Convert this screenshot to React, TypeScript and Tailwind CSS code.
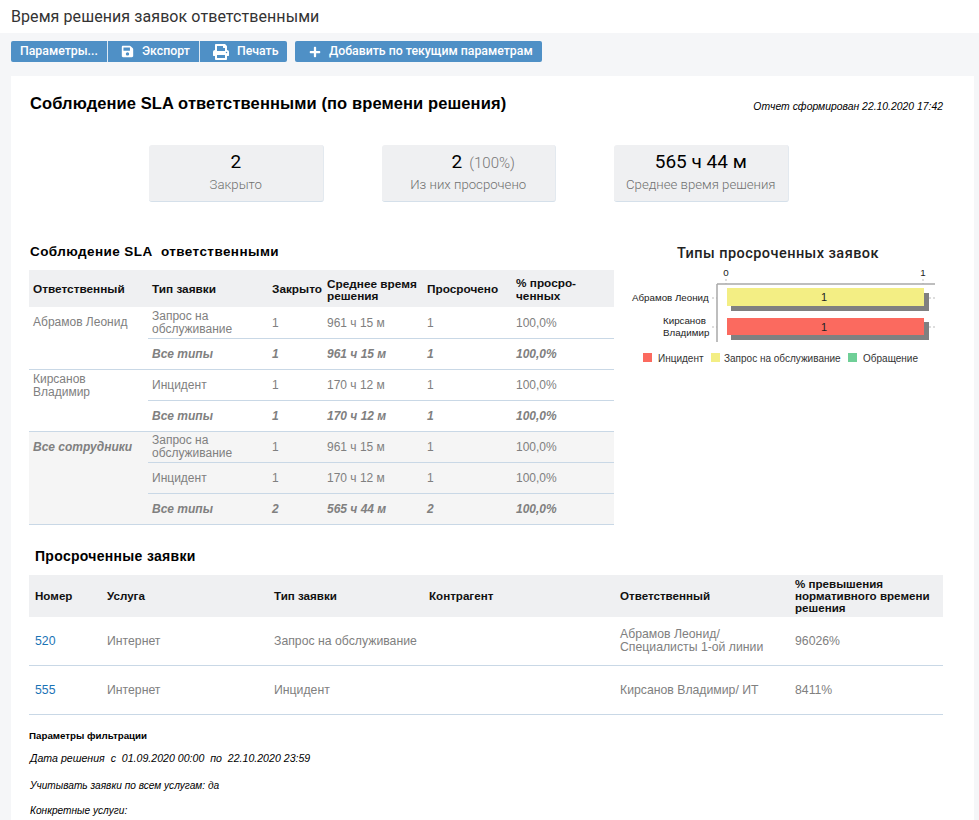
import { FaPlus, FaPrint, FaSave } from 'react-icons/fa'

const sans = "font-['Liberation_Sans',Arial,sans-serif]"

const Cell = ({ children, strong }: { children: React.ReactNode; strong?: boolean }) => (
  <td className={`px-1 pt-px align-middle leading-[13px] ${strong ? 'font-bold italic' : ''}`}>{children}</td>
)

const slaRows = [
  { who: 'Абрамов Леонид', whoClass: 'pt-[9px]', type: 'Запрос на обслуживание', closed: '1', avg: '961 ч 15 м', late: '1', pct: '100,0%' },
  { who: '', type: 'Все типы', closed: '1', avg: '961 ч 15 м', late: '1', pct: '100,0%', total: true, last: true },
  { who: 'Кирсанов Владимир', whoClass: 'pt-[3px]', type: 'Инцидент', closed: '1', avg: '170 ч 12 м', late: '1', pct: '100,0%' },
  { who: '', type: 'Все типы', closed: '1', avg: '170 ч 12 м', late: '1', pct: '100,0%', total: true, last: true },
]

const allRows = [
  { type: 'Запрос на обслуживание', closed: '1', avg: '961 ч 15 м', late: '1', pct: '100,0%' },
  { type: 'Инцидент', closed: '1', avg: '170 ч 12 м', late: '1', pct: '100,0%' },
  { type: 'Все типы', closed: '2', avg: '565 ч 44 м', late: '2', pct: '100,0%', total: true },
]

function StatCard({ value, note, label }: { value: string; note?: string; label: string }) {
  return (
    <div className="flex h-[57px] w-[174.5px] flex-col items-center rounded-[3px] border-r border-b border-r-[#e3e9ef] border-b-[#d5e0ea] bg-[#eff0f2] pt-[5px] font-['Roboto',sans-serif]">
      <div className={`h-[24px] text-[19px] leading-[24px] text-black ${note ? 'pl-[30px]' : ''}`}>
        {value}
        {note && <span className="ml-[7px] text-[15px] font-light text-[#777]">{note}</span>}
      </div>
      <div className="mt-[1px] text-[13.2px] font-light text-[#707070]">{label}</div>
    </div>
  )
}

function Chart() {
  return (
    <svg width="340" height="140" viewBox="0 0 340 140" className="block">
      <text x="158" y="23" textAnchor="middle" fontFamily="Roboto, sans-serif" fill="#222" fontSize="14.5" fontWeight="500" letterSpacing="0.45">
        Типы просроченных заявок
      </text>
      <path d="M92 63H97M92 92H97M309 63H315M309 92H315M106 44V49M303 44V49" stroke="#bbb" strokeWidth="1" strokeDasharray="2 2" fill="none" />
      <path d="M97 49H315M97 49V107" stroke="#a9a9a9" strokeWidth="1.5" fill="none" />
      <rect x="111" y="58" width="198" height="18" fill="#808080" />
      <rect x="111" y="87" width="198" height="18" fill="#808080" />
      <rect x="107" y="53" width="197" height="18" fill="#f3ee84" />
      <rect x="107" y="83" width="197" height="17" fill="#fb6a5f" />
      <g fontFamily="'Liberation Sans', sans-serif" fontSize="9.75" fill="#222">
        <text x="106" y="41" textAnchor="middle">0</text>
        <text x="303" y="41" textAnchor="middle">1</text>
        <text x="12" y="66">Абрамов Леонид</text>
        <text x="43" y="89">Кирсанов</text>
        <text x="43" y="101">Владимир</text>
      </g>
      <g fontFamily="'Liberation Sans', sans-serif" fontSize="11" fill="#222">
        <text x="204" y="66" textAnchor="middle">1</text>
        <text x="204" y="96" textAnchor="middle">1</text>
      </g>
      <rect x="23" y="118" width="9" height="9" fill="#fb6a5f" />
      <rect x="91" y="118" width="9" height="9" fill="#f3ee84" />
      <rect x="228" y="118" width="9" height="9" fill="#6fcf97" />
      <g fontFamily="'Liberation Sans', sans-serif" fontSize="10" fill="#333">
        <text x="38" y="127">Инцидент</text>
        <text x="104" y="127">Запрос на обслуживание</text>
        <text x="243" y="127">Обращение</text>
      </g>
    </svg>
  )
}

export default function App() {
  return (
    <div className={`h-[820px] w-[979px] overflow-hidden bg-[#f5f6f8] ${sans}`}>
      <div className="flex h-[33px] items-center bg-white pl-[11px] font-['Roboto',sans-serif] text-[16px] tracking-[0.08px] text-[#333]">
        Время решения заявок ответственными
      </div>

      <div className="flex h-[43px] items-start gap-2 pl-[11px] pt-2 font-['Roboto',sans-serif] text-[12.3px] font-medium text-white">
        <div className="flex h-[21px] overflow-hidden rounded-[2px] bg-[#4f90c6]">
          <div className="flex w-[97px] items-center border-r border-white/80 pl-[9px]">Параметры...</div>
          <div className="flex w-[92px] items-center gap-[8px] border-r border-white/80 pl-[13px]">
            <FaSave size={13} />
            Экспорт
          </div>
          <div className="flex w-[87px] items-center gap-[8px] pl-[13px]">
            <FaPrint size={16} />
            Печать
          </div>
        </div>
        <div className="flex h-[21px] w-[247px] items-center gap-[8px] rounded-[2px] bg-[#4f90c6] pl-[14px]">
          <FaPlus size={12} />
          Добавить по текущим параметрам
        </div>
      </div>

      <div className="ml-[11px] w-[963px] bg-white pl-[18px] pr-[31px] pt-[17px]">
        <div className="flex items-start justify-between">
          <h1 className="pl-px text-[16.5px] font-bold leading-[20px] tracking-[0.1px] text-black">
            Соблюдение SLA ответственными (по времени решения)
          </h1>
          <div className="pt-[8px] text-[10.4px] italic leading-[12px] text-black">Отчет сформирован 22.10.2020 17:42</div>
        </div>

        <div className="mt-[32px] flex gap-[58px] pl-[120px]">
          <StatCard value="2" label="Закрыто" />
          <StatCard value="2" note="(100%)" label="Из них просрочено" />
          <StatCard value="565 ч 44 м" label="Среднее время решения" />
        </div>

        <div className="mt-[39px] flex">
          <div className="w-[585px]">
            <h2 className="h-[29px] pl-px text-[13.5px] font-bold leading-[22px] tracking-[0.42px] text-black">
              Соблюдение SLA&nbsp; ответственными
            </h2>
            <table className="w-[585px] table-fixed border-collapse text-[12px] text-[#808080]">
              <colgroup>
                <col className="w-[119px]" />
                <col className="w-[120px]" />
                <col className="w-[55px]" />
                <col className="w-[100px]" />
                <col className="w-[89px]" />
                <col />
              </colgroup>
              <thead>
                <tr className="h-[37px] bg-[#eff0f2] text-left text-[11.8px] font-bold text-[#111]">
                  <th className="px-1 pt-[2px]">Ответственный</th>
                  <th className="px-1 pt-[2px]">Тип заявки</th>
                  <th className="px-1 pt-[2px]">Закрыто</th>
                  <th className="px-1 pt-[2px] leading-[12px]">Среднее время решения</th>
                  <th className="px-1 pt-[2px]">Просрочено</th>
                  <th className="px-1 pt-[2px] leading-[13px]">% просро-<br />ченных</th>
                </tr>
              </thead>
              <tbody>
                {slaRows.map((r, i) => (
                  <tr key={i} className={`h-[31px] ${r.last ? 'border-b border-b-[#c9d8e6]' : ''}`}>
                    {r.who ? (
                      <td rowSpan={2} className={`px-1 align-top leading-[13px] ${r.whoClass}`}>
                        {r.who}
                      </td>
                    ) : null}
                    <td className={`border-b border-b-[#c9d8e6] px-1 pt-px leading-[13px] ${r.total ? 'font-bold italic' : ''}`}>{r.type}</td>
                    <td className={`border-b border-b-[#c9d8e6] px-1 pt-px ${r.total ? 'font-bold italic' : ''}`}>{r.closed}</td>
                    <td className={`border-b border-b-[#c9d8e6] px-1 pt-px ${r.total ? 'font-bold italic' : ''}`}>{r.avg}</td>
                    <td className={`border-b border-b-[#c9d8e6] px-1 pt-px ${r.total ? 'font-bold italic' : ''}`}>{r.late}</td>
                    <td className={`border-b border-b-[#c9d8e6] px-1 pt-px ${r.total ? 'font-bold italic' : ''}`}>{r.pct}</td>
                  </tr>
                ))}
                {allRows.map((r, i) => (
                  <tr key={i} className="h-[31px] border-b border-b-[#c9d8e6] bg-[#f5f5f5]">
                    {i === 0 && (
                      <td rowSpan={3} className="px-1 pt-[9px] align-top font-bold italic leading-[13px]">
                        Все сотрудники
                      </td>
                    )}
                    <Cell strong={r.total}>{r.type}</Cell>
                    <Cell strong={r.total}>{r.closed}</Cell>
                    <Cell strong={r.total}>{r.avg}</Cell>
                    <Cell strong={r.total}>{r.late}</Cell>
                    <Cell strong={r.total}>{r.pct}</Cell>
                  </tr>
                ))}
              </tbody>
            </table>
          </div>
          <div className="-mt-[6px] ml-[6px]">
            <Chart />
          </div>
        </div>

        <h2 className="mt-[21px] h-[29px] pl-[6px] text-[14px] font-bold leading-[20px] tracking-[0.3px] text-black">
          Просроченные заявки
        </h2>
        <table className="w-[914px] table-fixed border-collapse text-[12.25px] text-[#808080]">
          <colgroup>
            <col className="w-[72px]" />
            <col className="w-[167px]" />
            <col className="w-[155px]" />
            <col className="w-[191px]" />
            <col className="w-[175px]" />
            <col />
          </colgroup>
          <thead>
            <tr className="h-[42px] bg-[#eff0f2] text-left text-[11.6px] font-bold text-[#111]">
              <th className="px-[6px]">Номер</th>
              <th className="px-[6px]">Услуга</th>
              <th className="px-[6px]">Тип заявки</th>
              <th className="px-[6px]">Контрагент</th>
              <th className="px-[6px]">Ответственный</th>
              <th className="px-[6px] leading-[12px]">
                % превышения нормативного времени решения
              </th>
            </tr>
          </thead>
          <tbody>
            <tr className="h-[49px] border-b border-b-[#c9d8e6]">
              <td className="px-[6px] text-[#1a73b5]">520</td>
              <td className="px-[6px]">Интернет</td>
              <td className="whitespace-nowrap px-[6px]">Запрос на обслуживание</td>
              <td className="px-[6px]"></td>
              <td className="px-[6px] leading-[13px]">Абрамов Леонид/<br />Специалисты 1-ой линии</td>
              <td className="px-[6px]">96026%</td>
            </tr>
            <tr className="h-[49px] border-b border-b-[#c9d8e6]">
              <td className="px-[6px] text-[#1a73b5]">555</td>
              <td className="px-[6px]">Интернет</td>
              <td className="px-[6px]">Инцидент</td>
              <td className="px-[6px]"></td>
              <td className="px-[6px]">Кирсанов Владимир/ ИТ</td>
              <td className="px-[6px]">8411%</td>
            </tr>
          </tbody>
        </table>

        <div className="pb-[20px] pt-[15px] text-[10.15px] leading-[12px] text-black">
          <div className="text-[9.75px] font-bold">Параметры фильтрации</div>
          <div className="mt-[10px] pl-px text-[10.6px] italic">Дата решения&nbsp; с&nbsp; 01.09.2020 00:00&nbsp; по&nbsp; 22.10.2020 23:59</div>
          <div className="mt-[16px] pl-px italic">Учитывать заявки по всем услугам: да</div>
          <div className="mt-[13px] pl-px italic">Конкретные услуги:</div>
        </div>
      </div>
    </div>
  )
}
